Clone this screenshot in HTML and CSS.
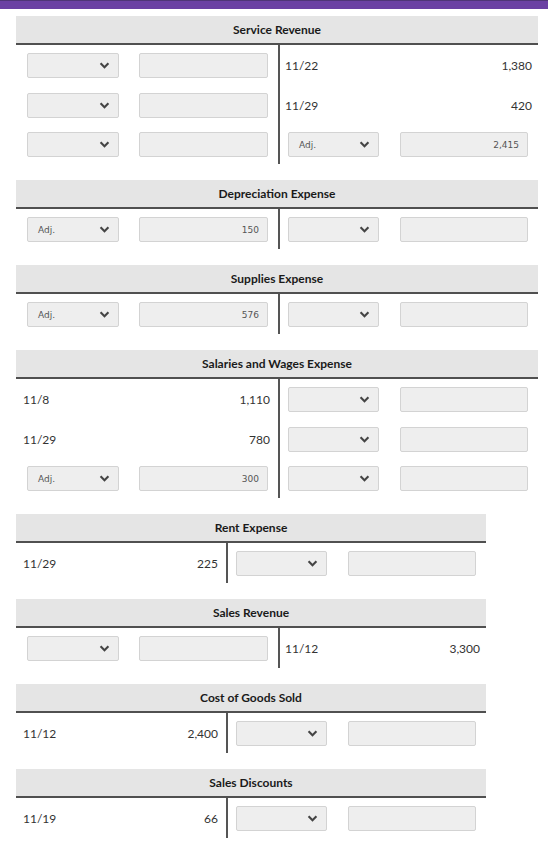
FILE: index.html
```html
<!DOCTYPE html>
<html lang="en">
<head>
<meta charset="utf-8">
<title>T-Accounts</title>
<link rel="stylesheet" href="styles.css">
</head>
<body>
<div class="topbar"></div>
<main class="ledger">

  <section class="account">
    <h2 class="acct-title">Service Revenue</h2>
    <div class="acct-body">
      <div class="side debit wide">
        <div class="row ctrl"><div class="select"><span class="sel-val"></span><svg class="chev" viewBox="0 0 12 8"><path d="M1.5 1.5L6 6L10.5 1.5"/></svg></div><div class="field"></div></div>
        <div class="row ctrl"><div class="select"><span class="sel-val"></span><svg class="chev" viewBox="0 0 12 8"><path d="M1.5 1.5L6 6L10.5 1.5"/></svg></div><div class="field"></div></div>
        <div class="row ctrl"><div class="select"><span class="sel-val"></span><svg class="chev" viewBox="0 0 12 8"><path d="M1.5 1.5L6 6L10.5 1.5"/></svg></div><div class="field"></div></div>
      </div>
      <div class="side credit wide">
        <div class="row text"><span>11/22</span><span>1,380</span></div>
        <div class="row text"><span>11/29</span><span>420</span></div>
        <div class="row ctrl"><div class="select"><span class="sel-val">Adj.</span><svg class="chev" viewBox="0 0 12 8"><path d="M1.5 1.5L6 6L10.5 1.5"/></svg></div><div class="field">2,415</div></div>
      </div>
    </div>
  </section>

  <section class="account">
    <h2 class="acct-title">Depreciation Expense</h2>
    <div class="acct-body">
      <div class="side debit wide">
        <div class="row ctrl"><div class="select"><span class="sel-val">Adj.</span><svg class="chev" viewBox="0 0 12 8"><path d="M1.5 1.5L6 6L10.5 1.5"/></svg></div><div class="field">150</div></div>
      </div>
      <div class="side credit wide">
        <div class="row ctrl"><div class="select"><span class="sel-val"></span><svg class="chev" viewBox="0 0 12 8"><path d="M1.5 1.5L6 6L10.5 1.5"/></svg></div><div class="field"></div></div>
      </div>
    </div>
  </section>

  <section class="account">
    <h2 class="acct-title">Supplies Expense</h2>
    <div class="acct-body">
      <div class="side debit wide">
        <div class="row ctrl"><div class="select"><span class="sel-val">Adj.</span><svg class="chev" viewBox="0 0 12 8"><path d="M1.5 1.5L6 6L10.5 1.5"/></svg></div><div class="field">576</div></div>
      </div>
      <div class="side credit wide">
        <div class="row ctrl"><div class="select"><span class="sel-val"></span><svg class="chev" viewBox="0 0 12 8"><path d="M1.5 1.5L6 6L10.5 1.5"/></svg></div><div class="field"></div></div>
      </div>
    </div>
  </section>

  <section class="account">
    <h2 class="acct-title">Salaries and Wages Expense</h2>
    <div class="acct-body">
      <div class="side debit wide">
        <div class="row text"><span>11/8</span><span>1,110</span></div>
        <div class="row text"><span>11/29</span><span>780</span></div>
        <div class="row ctrl"><div class="select"><span class="sel-val">Adj.</span><svg class="chev" viewBox="0 0 12 8"><path d="M1.5 1.5L6 6L10.5 1.5"/></svg></div><div class="field">300</div></div>
      </div>
      <div class="side credit wide">
        <div class="row ctrl"><div class="select"><span class="sel-val"></span><svg class="chev" viewBox="0 0 12 8"><path d="M1.5 1.5L6 6L10.5 1.5"/></svg></div><div class="field"></div></div>
        <div class="row ctrl"><div class="select"><span class="sel-val"></span><svg class="chev" viewBox="0 0 12 8"><path d="M1.5 1.5L6 6L10.5 1.5"/></svg></div><div class="field"></div></div>
        <div class="row ctrl"><div class="select"><span class="sel-val"></span><svg class="chev" viewBox="0 0 12 8"><path d="M1.5 1.5L6 6L10.5 1.5"/></svg></div><div class="field"></div></div>
      </div>
    </div>
  </section>

  <section class="account">
    <h2 class="acct-title">Rent Expense</h2>
    <div class="acct-body">
      <div class="side debit narrow">
        <div class="row text"><span>11/29</span><span>225</span></div>
      </div>
      <div class="side credit wide">
        <div class="row ctrl"><div class="select"><span class="sel-val"></span><svg class="chev" viewBox="0 0 12 8"><path d="M1.5 1.5L6 6L10.5 1.5"/></svg></div><div class="field"></div></div>
      </div>
    </div>
  </section>

  <section class="account">
    <h2 class="acct-title">Sales Revenue</h2>
    <div class="acct-body">
      <div class="side debit wide">
        <div class="row ctrl"><div class="select"><span class="sel-val"></span><svg class="chev" viewBox="0 0 12 8"><path d="M1.5 1.5L6 6L10.5 1.5"/></svg></div><div class="field"></div></div>
      </div>
      <div class="side credit narrow">
        <div class="row text"><span>11/12</span><span>3,300</span></div>
      </div>
    </div>
  </section>

  <section class="account">
    <h2 class="acct-title">Cost of Goods Sold</h2>
    <div class="acct-body">
      <div class="side debit narrow">
        <div class="row text"><span>11/12</span><span>2,400</span></div>
      </div>
      <div class="side credit wide">
        <div class="row ctrl"><div class="select"><span class="sel-val"></span><svg class="chev" viewBox="0 0 12 8"><path d="M1.5 1.5L6 6L10.5 1.5"/></svg></div><div class="field"></div></div>
      </div>
    </div>
  </section>

  <section class="account">
    <h2 class="acct-title">Sales Discounts</h2>
    <div class="acct-body">
      <div class="side debit narrow">
        <div class="row text"><span>11/19</span><span>66</span></div>
      </div>
      <div class="side credit wide">
        <div class="row ctrl"><div class="select"><span class="sel-val"></span><svg class="chev" viewBox="0 0 12 8"><path d="M1.5 1.5L6 6L10.5 1.5"/></svg></div><div class="field"></div></div>
      </div>
    </div>
  </section>

</main>
</body>
</html>
```

FILE: styles.css
```css
* { box-sizing: border-box; }

html, body {
  margin: 0;
  padding: 0;
  background: #ffffff;
}

body {
  font-family: Lato, "Liberation Sans", sans-serif;
  font-size: 12px;
  color: #333333;
}

.topbar {
  height: 9px;
  background: #6b41a3;
  border-top: 1px solid #4f3577;
}

.ledger {
  display: flex;
  flex-direction: column;
  align-items: flex-start;
  padding: 7px 0 0 16px;
}

.account {
  display: flex;
  flex-direction: column;
  width: max-content;
  margin-bottom: 16px;
}

.acct-title {
  margin: 0;
  height: 29px;
  line-height: 27px;
  background: #e5e5e5;
  border-bottom: 2px solid #505050;
  font-size: 12px;
  font-weight: 700;
  color: #1a1a1a;
  text-align: center;
}

.acct-body {
  display: flex;
}

.side {
  display: flex;
  flex-direction: column;
  gap: 0.5px;
  padding-top: 1px;
}

.side.credit {
  border-left: 2px solid #555555;
}

.debit.wide { width: 262px; }
.credit.wide { width: 260px; }
.debit.narrow { width: 210px; }
.credit.narrow { width: 208px; }

.row {
  height: 39px;
  display: flex;
  align-items: center;
}

.row.text {
  justify-content: space-between;
}

.debit .row.text { padding: 0 8px 0 7px; }
.credit .row.text { padding: 0 6px 0 5px; }

.debit .row.ctrl { padding: 0 10px 0 11px; gap: 20px; }
.credit .row.ctrl { padding: 0 10px 0 8px; gap: 21px; }

.select, .field {
  height: 25px;
  background: #eeeeee;
  border: 1px solid #d3d3d3;
  border-radius: 2px;
  font-family: "DejaVu Sans", Verdana, sans-serif;
  font-size: 9px;
  color: #555555;
}

.select {
  display: flex;
  align-items: center;
  justify-content: space-between;
  padding: 0 8px 0 10px;
}

.debit .select { width: 92px; }
.credit .select { width: 91px; }

.field {
  display: flex;
  align-items: center;
  justify-content: flex-end;
  padding: 0 8px;
}

.debit .field { width: 129px; }
.credit .field { width: 128px; }

.chev {
  width: 11px;
  height: 7px;
  fill: none;
  stroke: #444444;
  stroke-width: 2.4;
}
```
